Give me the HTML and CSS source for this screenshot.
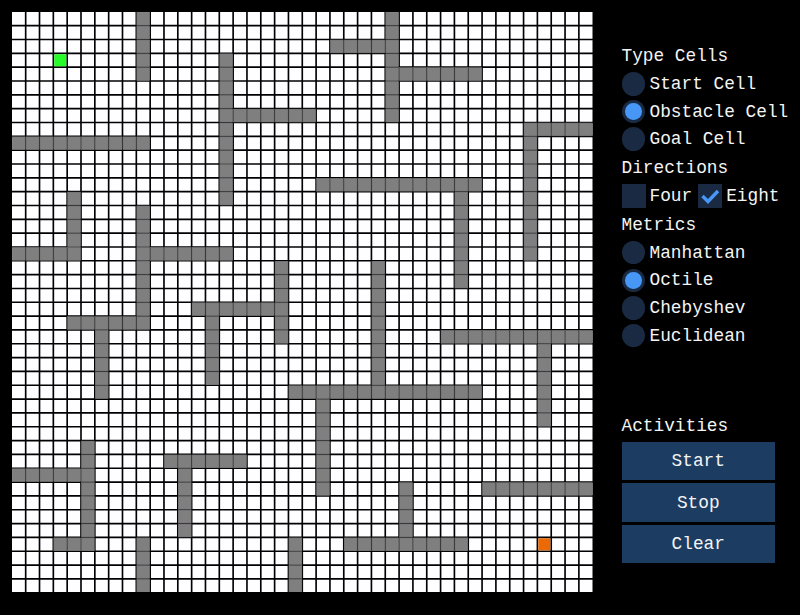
FILE: index.html
```html
<!DOCTYPE html>
<html lang="en">
<head>
<meta charset="utf-8">
<title>Pathfinding</title>
<link rel="stylesheet" href="styles.css">
</head>
<body>
<main class="app">
  <svg class="board" id="board" viewBox="0 0 581 580"></svg>
  <aside class="panel">
    <h2 class="heading">Type Cells</h2>
    <label class="option"><span class="radio"></span><span class="label">Start Cell</span></label>
    <label class="option"><span class="radio on"></span><span class="label">Obstacle Cell</span></label>
    <label class="option"><span class="radio"></span><span class="label">Goal Cell</span></label>
    <h2 class="heading directions">Directions</h2>
    <div class="checks">
      <span class="box"></span><span class="label">Four</span>
      <span class="box"><svg class="tick" viewBox="0 0 24 24"><path d="M4.5 12 L10 17.5 L20 7"/></svg></span><span class="label">Eight</span>
    </div>
    <h2 class="heading metrics">Metrics</h2>
    <label class="option"><span class="radio"></span><span class="label">Manhattan</span></label>
    <label class="option"><span class="radio on"></span><span class="label">Octile</span></label>
    <label class="option"><span class="radio"></span><span class="label">Chebyshev</span></label>
    <label class="option"><span class="radio"></span><span class="label">Euclidean</span></label>
    <h2 class="heading activities">Activities</h2>
    <div class="buttons">
      <button class="button">Start</button>
      <button class="button">Stop</button>
      <button class="button">Clear</button>
    </div>
  </aside>
</main>
<script src="board.js"></script>
</body>
</html>
```
FILE: styles.css
```css
body {
  margin: 0;
  background: #000;
  color: #f4f4f4;
  font-family: "Liberation Mono", monospace;
  font-size: 17.8px;
}
.app {
  display: flex;
  width: 800px;
  height: 615px;
  overflow: hidden;
}
.board {
  flex: none;
  width: 581px;
  height: 580px;
  margin: 12px 28.5px 0 12px;
}
.ground { fill: #fefdff; }
.line { stroke: #000; stroke-width: 1.65; }
.wall { fill: #807f80; stroke: #6c6b6c; stroke-width: 0.6; }
.start { fill: #28fc28; }
.goal { fill: #ec6a05; }
.panel {
  display: flex;
  flex-direction: column;
  width: 178px;
  padding-top: 42px;
  white-space: nowrap;
}
.heading {
  height: 28px;
  margin: 0;
  font-size: inherit;
  font-weight: normal;
  line-height: 28px;
}
.option {
  display: flex;
  align-items: center;
  height: 27.7px;
}
.label { line-height: 28px; }
.radio {
  display: flex;
  flex: none;
  align-items: center;
  justify-content: center;
  width: 23.5px;
  height: 23.5px;
  margin-right: 4.5px;
  border-radius: 50%;
  background: #1a2a43;
}
.on::before {
  content: "";
  width: 16.5px;
  height: 16.5px;
  border-radius: 50%;
  background: #4798f6;
}
.directions { margin-top: 0.7px; }
.checks {
  display: flex;
  align-items: center;
  height: 28px;
}
.box {
  flex: none;
  width: 24px;
  height: 24px;
  margin-right: 4px;
  background: #1a2a43;
}
.label + .box { margin-left: 6px; }
.tick { display: block; width: 24px; height: 24px; }
.tick path { fill: none; stroke: #4798f6; stroke-width: 3.4; }
.metrics { margin-top: 1px; }
.activities { margin-top: 62.5px; }
.buttons {
  display: flex;
  flex-direction: column;
  gap: 3px;
  width: 153.5px;
  margin-top: 1.6px;
}
.button {
  height: 38.5px;
  padding: 1px 0 0;
  border: 0;
  background: #1d3c62;
  color: inherit;
  font: inherit;
}
```
FILE: board.js
```js
const SIZE = 42;
const PITCH = 13.83;
const OFFSET = -0.15;

// Each wall is [first column, first row, last column, last row].
const walls = [
  [9, 0, 9, 4], [0, 9, 9, 9], [15, 3, 15, 13], [16, 7, 21, 7],
  [23, 2, 26, 2], [27, 0, 27, 7], [28, 4, 33, 4], [37, 8, 41, 8],
  [37, 9, 37, 17], [22, 12, 33, 12], [32, 13, 32, 19], [4, 13, 4, 16],
  [0, 17, 4, 17], [9, 14, 9, 21], [4, 22, 9, 22], [10, 17, 15, 17],
  [6, 23, 6, 27], [13, 21, 18, 21], [19, 18, 19, 23], [14, 22, 14, 26],
  [26, 18, 26, 26], [20, 27, 33, 27], [22, 28, 22, 34], [31, 23, 41, 23],
  [38, 24, 38, 29], [5, 31, 5, 38], [0, 33, 4, 33], [3, 38, 4, 38],
  [11, 32, 16, 32], [12, 33, 12, 37], [9, 38, 9, 41], [20, 38, 20, 41],
  [34, 34, 41, 34], [28, 34, 28, 37], [24, 38, 32, 38]
];

const board = document.getElementById("board");

function add(name, className, attributes) {
  const node = document.createElementNS("http://www.w3.org/2000/svg", name);
  node.setAttribute("class", className);
  for (const key in attributes) node.setAttribute(key, attributes[key]);
  board.appendChild(node);
}

function cell(column, row, className, inset) {
  add("rect", className, {
    x: OFFSET + column * PITCH + inset,
    y: OFFSET + row * PITCH + inset,
    width: PITCH - 2 * inset,
    height: PITCH - 2 * inset
  });
}

add("rect", "ground", { x: 0, y: 0, width: 580.5, height: 580 });
for (let i = 1; i < SIZE; i++) {
  const p = OFFSET + i * PITCH;
  add("line", "line", { x1: p, y1: 0, x2: p, y2: 580 });
  add("line", "line", { x1: 0, y1: p, x2: 581, y2: p });
}
for (const [c1, r1, c2, r2] of walls) {
  for (let c = c1; c <= c2; c++) {
    for (let r = r1; r <= r2; r++) cell(c, r, "wall", 0.5);
  }
}
cell(3, 3, "start", 0.9);
cell(38, 38, "goal", 0.9);
```
